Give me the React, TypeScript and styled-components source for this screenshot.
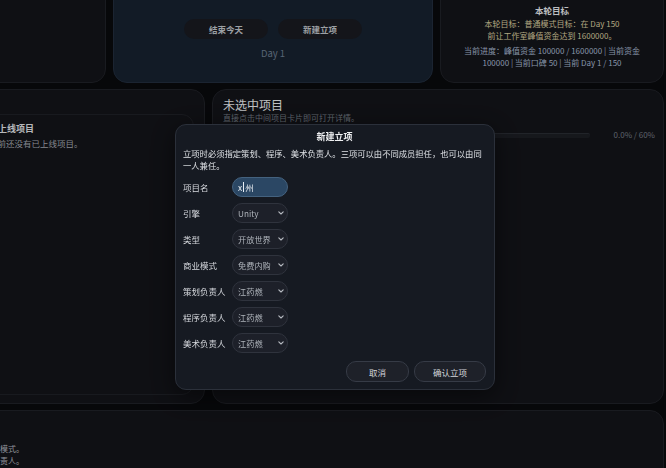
import React from 'react'
import styled, { createGlobalStyle } from 'styled-components'

const GlobalStyle = createGlobalStyle`
  html, body {
    margin: 0;
    padding: 0;
    background: #090a0d;
    overflow: hidden;
  }
  body {
    font-family: 'Noto Sans CJK SC', 'Noto Sans', sans-serif;
    color: #e6e8eb;
  }
`

const Page = styled.div`
  width: 691px;
  margin: -20px 0 0 -27px;
  display: flex;
  flex-direction: column;
  gap: 6px;
`

const TopRow = styled.section`
  display: grid;
  grid-template-columns: 133px 320px 1fr;
  gap: 7px;
  height: 103px;
`

const Panel = styled.div<{ $bg?: string; $border?: string }>`
  background: ${p => p.$bg || '#131419'};
  border: 1px solid ${p => p.$border || '#202228'};
  border-radius: 14px;
  box-sizing: border-box;
`

const CenterPanel = styled(Panel)`
  display: flex;
  flex-direction: column;
  align-items: center;
  padding-top: 38px;
`

const ActionBar = styled.div`
  display: flex;
  gap: 10px;
`

const ActionButton = styled.button`
  width: 84px;
  height: 20px;
  border: none;
  border-radius: 10px;
  background: #191b21;
  color: #c4c8ce;
  font-family: inherit;
  font-size: 8.5px;
  font-weight: 700;
  padding: 0;
`

const DayText = styled.div`
  margin-top: 7px;
  font-size: 9.5px;
  line-height: 14px;
  color: #6e7e90;
`

const GoalPanel = styled(Panel)`
  padding: 23px 10px 0;
  text-align: center;
`

const GoalTitle = styled.div`
  font-size: 8.5px;
  font-weight: 700;
  line-height: 12px;
  color: #eceef1;
`

const GoalText = styled.p<{ $tone: string; $gap: number; $width: number }>`
  margin: ${p => p.$gap}px auto 0;
  max-width: ${p => p.$width}px;
  font-size: 8px;
  line-height: 12px;
  color: ${p => p.$tone};
`

const MainRow = styled.section`
  display: grid;
  grid-template-columns: 232px 1fr;
  gap: 7px;
  height: 315px;
`

const SidePanel = styled(Panel)`
  padding: 24px 10px 8px;
  display: flex;
`

const InnerCard = styled.div`
  flex: 1;
  border: 1px solid #1f2127;
  border-radius: 12px;
  padding: 7px 4px;
`

const CardTitle = styled.div`
  font-size: 9px;
  font-weight: 700;
  line-height: 14px;
  color: #e4e6ea;
`

const CardText = styled.div`
  font-size: 8.5px;
  line-height: 14px;
  color: #a5aab2;
`

const DetailPanel = styled(Panel)`
  padding: 8px 8px 0 10px;
`

const DetailTitle = styled.div`
  font-size: 12px;
  line-height: 14px;
  color: #eef0f3;
`

const DetailHint = styled.div`
  font-size: 8px;
  line-height: 12px;
  color: #767d87;
`

const ProgressRow = styled.div`
  display: flex;
  align-items: center;
  gap: 24px;
  margin-top: 5px;
`

const ProgressTrack = styled.div`
  flex: 1;
  height: 4px;
  border-radius: 2px;
  background: #1c1e24;
  border-top: 1px solid #2a2d34;
`

const ProgressLabel = styled.div`
  font-size: 8px;
  line-height: 12px;
  color: #767d87;
`

const BottomPanel = styled(Panel)`
  height: 80px;
  padding: 32px 10px 0;
`

const BottomText = styled.div`
  font-size: 8px;
  line-height: 12px;
  color: #b4b9c0;
`

const Backdrop = styled.div`
  position: fixed;
  inset: 0;
  background: rgba(0, 0, 0, 0.2);
  display: flex;
  align-items: flex-start;
`

const Modal = styled.div`
  margin: 124px 0 0 175px;
  width: 320px;
  box-sizing: border-box;
  padding: 6px 8px 7px 7px;
  background: #161a22;
  border: 1px solid #2b303a;
  border-radius: 11px;
  box-shadow: 0 6px 24px rgba(0, 0, 0, 0.5);
`

const ModalTitle = styled.div`
  text-align: center;
  font-size: 9px;
  font-weight: 700;
  line-height: 12px;
  color: #f0f1f3;
`

const ModalDesc = styled.p`
  margin: 4px 0 0;
  font-size: 8.3px;
  line-height: 12px;
  color: #dde0e4;
`

const FieldList = styled.div`
  margin-top: 6px;
  display: flex;
  flex-direction: column;
  gap: 6px;
`

const FieldRow = styled.div`
  display: grid;
  grid-template-columns: 49px 56px;
  align-items: center;
  height: 20px;
`

const FieldLabel = styled.span`
  font-size: 8.5px;
  color: #d6d9de;
`

const NameInput = styled.div`
  height: 20px;
  box-sizing: border-box;
  border-radius: 10px;
  background: #2b4764;
  border: 1px solid #44627f;
  padding: 0 5px;
  display: flex;
  align-items: center;
  font-size: 8.3px;
  color: #eef2f6;
`

const Caret = styled.span`
  display: inline-block;
  width: 1px;
  height: 10px;
  margin: 0 1px;
  background: #e8eef5;
`

const SelectBox = styled.div`
  height: 20px;
  box-sizing: border-box;
  border-radius: 10px;
  background: #1d2029;
  border: 1px solid #2f333d;
  padding: 0 3px 0 5px;
  display: flex;
  align-items: center;
  justify-content: space-between;
  font-size: 8.2px;
  color: #aeb3ba;
  white-space: nowrap;
`

const ModalFooter = styled.div`
  margin-top: 8px;
  display: flex;
  justify-content: flex-end;
  gap: 5px;
`

const FooterButton = styled.button<{ $w: number }>`
  width: ${p => p.$w}px;
  height: 21px;
  border-radius: 10px;
  background: #1e2129;
  border: 1px solid #363b46;
  color: #d3d6db;
  font-family: inherit;
  font-size: 8.5px;
  padding: 0;
`

const Chevron = () => (
  <svg width="6" height="4" viewBox="0 0 6 4" fill="none">
    <path d="M0.8 0.8 L3 3 L5.2 0.8" stroke="#b6bac1" strokeWidth="1.1" strokeLinecap="round" strokeLinejoin="round" />
  </svg>
)

const selects: [string, string][] = [
  ['引擎', 'Unity'],
  ['类型', '开放世界'],
  ['商业模式', '免费内购'],
  ['策划负责人', '江药燃'],
  ['程序负责人', '江药燃'],
  ['美术负责人', '江药燃'],
]

export default function App() {
  return (
    <>
      <GlobalStyle />
      <Page>
        <TopRow>
          <Panel />
          <CenterPanel $bg="#172230" $border="#222e3e">
            <ActionBar>
              <ActionButton>结束今天</ActionButton>
              <ActionButton>新建立项</ActionButton>
            </ActionBar>
            <DayText>Day 1</DayText>
          </CenterPanel>
          <GoalPanel>
            <GoalTitle>本轮目标</GoalTitle>
            <GoalText $tone="#ddd0a2" $gap={2} $width={139}>
              本轮目标：普通模式目标：在 Day 150 前让工作室峰值资金达到 1600000。
            </GoalText>
            <GoalText $tone="#a9bad2" $gap={3} $width={182}>
              当前进度：峰值资金 100000 / 1600000 | 当前资金 100000 | 当前口碑 50 | 当前 Day 1 / 150
            </GoalText>
          </GoalPanel>
        </TopRow>

        <MainRow>
          <SidePanel>
            <InnerCard>
              <CardTitle>已上线项目</CardTitle>
              <CardText>目前还没有已上线项目。</CardText>
            </InnerCard>
          </SidePanel>
          <DetailPanel>
            <DetailTitle>未选中项目</DetailTitle>
            <DetailHint>直接点击中间项目卡片即可打开详情。</DetailHint>
            <ProgressRow>
              <ProgressTrack />
              <ProgressLabel>0.0% / 60%</ProgressLabel>
            </ProgressRow>
          </DetailPanel>
        </MainRow>

        <BottomPanel>
          <BottomText>普通模式。</BottomText>
          <BottomText>各负责人。</BottomText>
        </BottomPanel>
      </Page>

      <Backdrop>
        <Modal>
          <ModalTitle>新建立项</ModalTitle>
          <ModalDesc>
            立项时必须指定策划、程序、美术负责人。三项可以由不同成员担任，也可以由同一人兼任。
          </ModalDesc>
          <FieldList>
            <FieldRow>
              <FieldLabel>项目名</FieldLabel>
              <NameInput>
                x<Caret />州
              </NameInput>
            </FieldRow>
            {selects.map(([label, value]) => (
              <FieldRow key={label}>
                <FieldLabel>{label}</FieldLabel>
                <SelectBox>
                  <span>{value}</span>
                  <Chevron />
                </SelectBox>
              </FieldRow>
            ))}
          </FieldList>
          <ModalFooter>
            <FooterButton $w={63}>取消</FooterButton>
            <FooterButton $w={72}>确认立项</FooterButton>
          </ModalFooter>
        </Modal>
      </Backdrop>
    </>
  )
}
